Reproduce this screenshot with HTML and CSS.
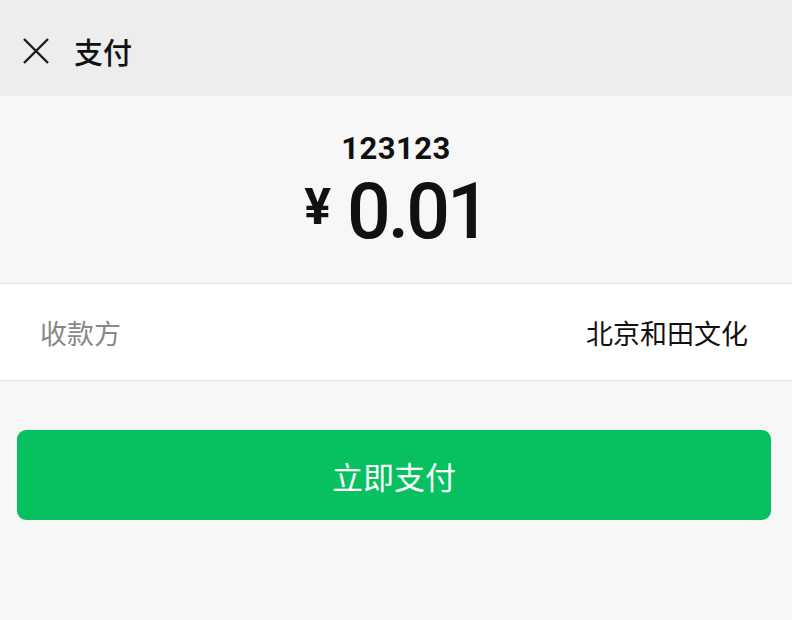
FILE: index.html
```html
<!DOCTYPE html>
<html lang="zh-CN">
<head>
    <meta charset="UTF-8">
    <title>支付</title>
    <meta name="viewport" content="width=device-width, initial-scale=1.0">
    <link rel="stylesheet" href="styles.css">
</head>
<body>

<header class="top-bar">
    <svg class="close-icon" width="28" height="28" viewBox="0 0 28 28">
        <path d="M2 2 L26 26 M26 2 L2 26" stroke="#1a1a1a" stroke-width="2.4" fill="none"/>
    </svg>
    <span class="top-title">支付</span>
</header>

<section class="amount-box">
    <div class="order-no">123123</div>
    <div class="amount">
        <span class="currency">¥</span>
        <span class="value">0.01</span>
    </div>
</section>

<div class="info-row">
    <span class="info-label">收款方</span>
    <span class="info-value">北京和田文化</span>
</div>

<div class="actions">
    <button type="button" class="pay-btn">立即支付</button>
</div>

</body>
</html>
```

FILE: styles.css
```css
body {
    margin: 0;
    background-color: #f7f7f7;
    font-family: Roboto, "Noto Sans CJK SC", sans-serif;
    color: #111;
}
.top-bar {
    height: 96px;
    box-sizing: border-box;
    background-color: #ededed;
    display: flex;
    align-items: center;
    padding: 6px 0 0 22px;
}
.close-icon {
    display: block;
    margin-right: 24px;
}
.top-title {
    font-family: "Noto Sans CJK SC", sans-serif;
    font-size: 29px;
    font-weight: 500;
}
.amount-box {
    height: 188px;
    display: flex;
    flex-direction: column;
    align-items: center;
    padding-top: 33px;
    box-sizing: border-box;
    border-bottom: 1px solid #e3e3e3;
}
.order-no {
    font-size: 31px;
    font-weight: 700;
    line-height: 40px;
    letter-spacing: 0.5px;
}
.amount {
    display: flex;
    align-items: center;
    margin-top: 3px;
    height: 80px;
}
.currency {
    font-size: 50px;
    font-weight: 700;
    margin-right: 16px;
    margin-top: -10px;
}
.value {
    font-size: 77px;
    font-weight: 500;
    letter-spacing: -3px;
}
.info-row {
    height: 96px;
    background-color: #fff;
    border-bottom: 1px solid #e3e3e3;
    display: flex;
    justify-content: space-between;
    align-items: center;
    padding: 0 44px 0 40px;
    font-family: "Noto Sans CJK SC", sans-serif;
    font-size: 27px;
}
.info-label {
    color: #888;
}
.info-value {
    color: #111;
}
.actions {
    padding: 49px 21px 0 17px;
}
.pay-btn {
    display: block;
    width: 100%;
    height: 90px;
    border: none;
    border-radius: 9px;
    background-color: #07c160;
    color: #fff;
    font-family: "Noto Sans CJK SC", sans-serif;
    font-size: 31px;
    cursor: pointer;
}
```
